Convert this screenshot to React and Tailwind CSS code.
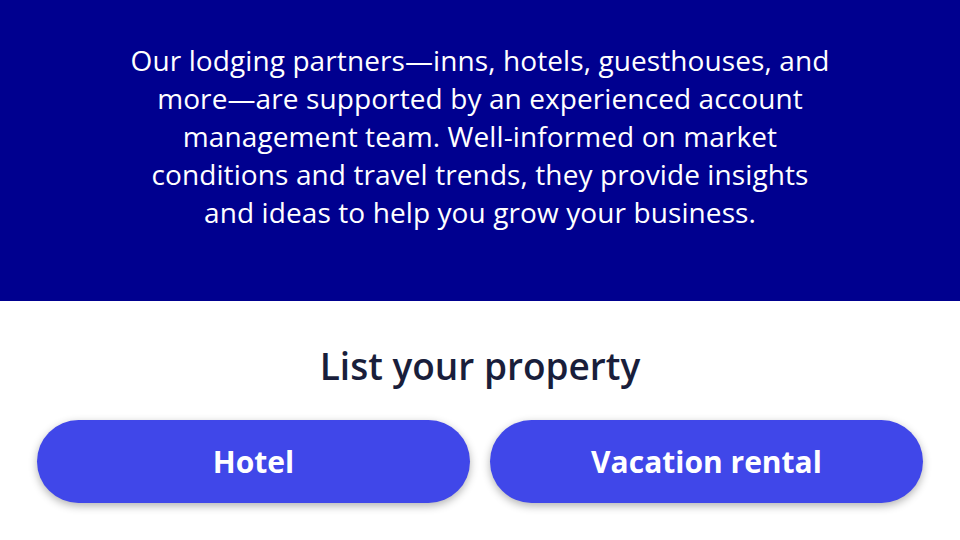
export default function App() {
  const font = { fontFamily: '"Open Sans", Lato, sans-serif' }
  return (
    <div className="w-[960px] h-[540px] bg-white overflow-hidden" style={font}>
      <section className="bg-[#00008f] h-[301px] pt-[41px]">
        <p className="text-center text-white text-[28px] leading-[38px] font-medium tracking-[0.1px] whitespace-nowrap">
          Our lodging partners—inns, hotels, guesthouses, and<br />
          more—are supported by an experienced account<br />
          management team. Well-informed on market<br />
          conditions and travel trends, they provide insights<br />
          and ideas to help you grow your business.
        </p>
      </section>
      <section className="pt-[44px] px-[37px]">
        <h2 className="text-center text-[37px] leading-[42px] font-semibold text-[#191e3b]">List your property</h2>
        <div className="mt-[33px] grid grid-cols-2 gap-[20px]">
          <button className="h-[83px] rounded-full bg-[#4047e9] text-white text-[30px] font-bold shadow-[0_3px_8px_rgba(0,0,0,0.3)]">
            Hotel
          </button>
          <button className="h-[83px] rounded-full bg-[#4047e9] text-white text-[30px] font-bold shadow-[0_3px_8px_rgba(0,0,0,0.3)]">
            Vacation rental
          </button>
        </div>
      </section>
    </div>
  )
}
